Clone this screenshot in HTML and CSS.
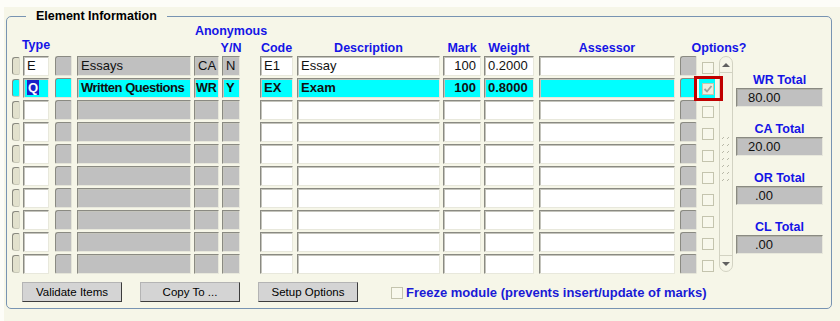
FILE: index.html
```html
<!DOCTYPE html>
<html>
<head>
    <title>Element Information</title>
    <meta name="viewport" content="width=device-width, initial-scale=1.0">
    <link rel="stylesheet" href="styles.css">
</head>
<body>
    <div class="screen">
        <fieldset class="group">
            <legend>Element Information</legend>

            <!-- Column headings -->
            <div class="head">
                <span class="anon">Anonymous</span>
            </div>
            <div class="head">
                <span class="c-ind"></span>
                <span class="c-type raised">Type</span>
                <span class="c-btn"></span>
                <span class="c-name"></span>
                <span class="c-ca"></span>
                <span class="c-yn">Y/N</span>
                <span class="c-code">Code</span>
                <span class="c-desc">Description</span>
                <span class="c-mark">Mark</span>
                <span class="c-weight">Weight</span>
                <span class="c-assess">Assessor</span>
                <span class="opts">Options?</span>
            </div>

            <div class="body">
                <div class="rows">
                    <div class="row">
                        <div class="c-ind ind"></div>
                        <div class="c-type f white">E</div>
                        <div class="c-btn sq grey"></div>
                        <div class="c-name f grey">Essays</div>
                        <div class="c-ca f grey">CA</div>
                        <div class="c-yn f grey">N</div>
                        <div class="c-code f white">E1</div>
                        <div class="c-desc f white">Essay</div>
                        <div class="c-mark f white num">100</div>
                        <div class="c-weight f white">0.2000</div>
                        <div class="c-assess f white"></div>
                        <div class="c-btn2 sq grey"></div>
                        <div class="c-chk"><span class="box"></span></div>
                    </div>
                    <div class="row current">
                        <div class="c-ind ind"></div>
                        <div class="c-type f"><span class="sel">Q</span></div>
                        <div class="c-btn sq"></div>
                        <div class="c-name f tight">Written Questions</div>
                        <div class="c-ca f narrow">WR</div>
                        <div class="c-yn f">Y</div>
                        <div class="c-code f">EX</div>
                        <div class="c-desc f">Exam</div>
                        <div class="c-mark f num">100</div>
                        <div class="c-weight f">0.8000</div>
                        <div class="c-assess f"></div>
                        <div class="c-btn2 sq"></div>
                        <div class="c-chk">
                            <span class="box checked">
                                <svg width="10" height="10" viewBox="0 0 10 10"><path d="M1.5 5 L4 7.5 L8.5 2" fill="none" stroke="#a0a098" stroke-width="1.8"/></svg>
                            </span>
                            <span class="focus"></span>
                        </div>
                    </div>
                    <div class="row">
                        <div class="c-ind ind"></div><div class="c-type f white"></div><div class="c-btn sq grey"></div><div class="c-name f grey"></div><div class="c-ca f grey"></div><div class="c-yn f grey"></div><div class="c-code f white"></div><div class="c-desc f white"></div><div class="c-mark f white"></div><div class="c-weight f white"></div><div class="c-assess f white"></div><div class="c-btn2 sq grey"></div><div class="c-chk"><span class="box"></span></div>
                    </div>
                    <div class="row">
                        <div class="c-ind ind"></div><div class="c-type f white"></div><div class="c-btn sq grey"></div><div class="c-name f grey"></div><div class="c-ca f grey"></div><div class="c-yn f grey"></div><div class="c-code f white"></div><div class="c-desc f white"></div><div class="c-mark f white"></div><div class="c-weight f white"></div><div class="c-assess f white"></div><div class="c-btn2 sq grey"></div><div class="c-chk"><span class="box"></span></div>
                    </div>
                    <div class="row">
                        <div class="c-ind ind"></div><div class="c-type f white"></div><div class="c-btn sq grey"></div><div class="c-name f grey"></div><div class="c-ca f grey"></div><div class="c-yn f grey"></div><div class="c-code f white"></div><div class="c-desc f white"></div><div class="c-mark f white"></div><div class="c-weight f white"></div><div class="c-assess f white"></div><div class="c-btn2 sq grey"></div><div class="c-chk"><span class="box"></span></div>
                    </div>
                    <div class="row">
                        <div class="c-ind ind"></div><div class="c-type f white"></div><div class="c-btn sq grey"></div><div class="c-name f grey"></div><div class="c-ca f grey"></div><div class="c-yn f grey"></div><div class="c-code f white"></div><div class="c-desc f white"></div><div class="c-mark f white"></div><div class="c-weight f white"></div><div class="c-assess f white"></div><div class="c-btn2 sq grey"></div><div class="c-chk"><span class="box"></span></div>
                    </div>
                    <div class="row">
                        <div class="c-ind ind"></div><div class="c-type f white"></div><div class="c-btn sq grey"></div><div class="c-name f grey"></div><div class="c-ca f grey"></div><div class="c-yn f grey"></div><div class="c-code f white"></div><div class="c-desc f white"></div><div class="c-mark f white"></div><div class="c-weight f white"></div><div class="c-assess f white"></div><div class="c-btn2 sq grey"></div><div class="c-chk"><span class="box"></span></div>
                    </div>
                    <div class="row">
                        <div class="c-ind ind"></div><div class="c-type f white"></div><div class="c-btn sq grey"></div><div class="c-name f grey"></div><div class="c-ca f grey"></div><div class="c-yn f grey"></div><div class="c-code f white"></div><div class="c-desc f white"></div><div class="c-mark f white"></div><div class="c-weight f white"></div><div class="c-assess f white"></div><div class="c-btn2 sq grey"></div><div class="c-chk"><span class="box"></span></div>
                    </div>
                    <div class="row">
                        <div class="c-ind ind"></div><div class="c-type f white"></div><div class="c-btn sq grey"></div><div class="c-name f grey"></div><div class="c-ca f grey"></div><div class="c-yn f grey"></div><div class="c-code f white"></div><div class="c-desc f white"></div><div class="c-mark f white"></div><div class="c-weight f white"></div><div class="c-assess f white"></div><div class="c-btn2 sq grey"></div><div class="c-chk"><span class="box"></span></div>
                    </div>
                    <div class="row">
                        <div class="c-ind ind"></div><div class="c-type f white"></div><div class="c-btn sq grey"></div><div class="c-name f grey"></div><div class="c-ca f grey"></div><div class="c-yn f grey"></div><div class="c-code f white"></div><div class="c-desc f white"></div><div class="c-mark f white"></div><div class="c-weight f white"></div><div class="c-assess f white"></div><div class="c-btn2 sq grey"></div><div class="c-chk"><span class="box"></span></div>
                    </div>
                </div>

                <!-- Record scrollbar -->
                <div class="scroll">
                    <div class="sb-end sb-up">
                        <svg width="12" height="8" viewBox="0 0 12 8"><path d="M2 6 L6 2 L10 6 Z" fill="#606060"/></svg>
                    </div>
                    <div class="sb-track">
                        <svg class="grip" width="10" height="48" viewBox="0 0 10 48">
                            <g stroke="#b8b8a8" stroke-width="1">
                                <path d="M1 4 L3 2 M6 4 L8 2"/>
                                <path d="M1 11 L3 9 M6 11 L8 9"/>
                                <path d="M1 18 L3 16 M6 18 L8 16"/>
                                <path d="M1 25 L3 23 M6 25 L8 23"/>
                                <path d="M1 32 L3 30 M6 32 L8 30"/>
                                <path d="M1 39 L3 37 M6 39 L8 37"/>
                                <path d="M1 46 L3 44 M6 46 L8 44"/>
                            </g>
                        </svg>
                    </div>
                    <div class="sb-end sb-down">
                        <svg width="12" height="8" viewBox="0 0 12 8"><path d="M2 2 L6 6 L10 2 Z" fill="#606060"/></svg>
                    </div>
                </div>

                <!-- Totals per element type -->
                <div class="totals">
                    <div class="tot-label">WR Total</div>
                    <div class="tot-box">80.00</div>
                    <div class="tot-label">CA Total</div>
                    <div class="tot-box">20.00</div>
                    <div class="tot-label">OR Total</div>
                    <div class="tot-box short">.00</div>
                    <div class="tot-label">CL Total</div>
                    <div class="tot-box short">.00</div>
                </div>
            </div>

            <div class="actions">
                <button class="btn">Validate Items</button>
                <button class="btn">Copy To ...</button>
                <button class="btn">Setup Options</button>
                <span class="box freeze-box"></span>
                <span class="freeze">Freeze module (prevents insert/update of marks)</span>
            </div>
        </fieldset>
    </div>
</body>
</html>
```

FILE: styles.css
```css
* {
    box-sizing: border-box;
}

body {
    margin: 0;
    background-color: #fdfdf8;
    font-family: "Liberation Sans", Arial, sans-serif;
}

.screen {
    margin: 7px 0 0 4px;
    padding-top: 2px;
    height: 314px;
    background-color: #f6f6e8;
}

.group {
    margin: 0 0 0 2px;
    width: 826px;
    padding: 1px 6px 6px 5px;
    border: 1px solid #7894b2;
    border-radius: 5px;
}

.group legend {
    margin-left: 14px;
    padding: 0 10px;
    font-size: 12.5px;
    font-weight: bold;
    line-height: 14px;
    color: #000;
}

/* headings */
.head {
    display: flex;
    height: 14px;
    font-size: 12.5px;
    font-weight: bold;
    line-height: 14px;
    color: #1414e6;
}

.head + .head {
    margin-top: 3px;
}

.head span {
    display: flex;
    justify-content: center;
    white-space: nowrap;
}

.head .raised {
    margin-top: -3px;
}

.anon {
    margin-left: 210px;
    width: 18px;
}

.opts {
    margin-left: 5px;
    width: 78px;
}

/* column sizes */
.c-ind { width: 8px; }
.c-type { width: 26px; margin-left: 3px; }
.c-btn { width: 17px; margin-left: 6px; }
.c-name { width: 114px; margin-left: 5px; }
.c-ca { width: 25px; margin-left: 3px; }
.c-yn { width: 18px; margin-left: 3px; }
.c-code { width: 33px; margin-left: 20px; }
.c-desc { width: 143px; margin-left: 4px; }
.c-mark { width: 38px; margin-left: 3px; }
.c-weight { width: 50px; margin-left: 3px; }
.c-assess { width: 136px; margin-left: 5px; }
.c-btn2 { width: 17px; margin-left: 5px; }
.c-chk { width: 16px; margin-left: 2px; padding: 6px 0 0 3px; position: relative; }

/* rows */
.body {
    display: flex;
    margin-top: 1px;
}

.rows {
    display: flex;
    flex-direction: column;
    gap: 2px;
}

.row {
    display: flex;
    height: 20px;
}

.f {
    height: 20px;
    padding: 0 3px;
    border: 1px solid;
    border-color: #8a8a82 #e8e8dc #e8e8dc #8a8a82;
    box-shadow: inset 1px 1px 0 #c4c4bc;
    font-size: 13px;
    line-height: 18px;
    color: #111;
    white-space: nowrap;
    overflow: hidden;
}

.num {
    text-align: right;
    padding-right: 4px;
}

.white { background-color: #fff; }
.grey { background-color: #c0c0c0; }

.ind {
    height: 18px;
    margin-top: 1px;
    border: 1px solid;
    border-color: #8a8a80 #d8d8c8 #c8c8b8 #8a8a80;
    border-radius: 3px 2px 2px 3px;
    background-color: #e2e1cd;
}

.sq {
    height: 20px;
    border: 1px solid;
    border-color: #8a8a82 #e4e4d8 #e4e4d8 #8a8a82;
    border-radius: 3px 2px 2px 2px;
}

.box {
    display: block;
    width: 12px;
    height: 12px;
    border: 1px solid #c4c4ae;
    background-color: #f8f8ec;
}

.row.current > div:not(.c-chk) {
    background-color: #00ffff;
    font-weight: bold;
}

.row.current .c-chk {
    background-color: #00ffff;
    padding-top: 5px;
}

.row.current .tight {
    letter-spacing: -0.5px;
}

.row.current .narrow {
    padding: 0 1px;
    font-size: 12.5px;
}

.row.current .box {
    background-color: #eeeedf;
}

.box svg {
    display: block;
}

.sel {
    background-color: #1a22c8;
    color: #fff;
    padding: 0 1px;
}

.focus {
    position: absolute;
    left: -5px;
    top: -2px;
    width: 29px;
    height: 25px;
    border: 3px solid #c00000;
}

/* scrollbar */
.scroll {
    margin-left: 4px;
    width: 14px;
    height: 216px;
    display: flex;
    flex-direction: column;
    border: 1px solid #d2d2c2;
    border-radius: 7px;
}

.sb-end {
    height: 16px;
    display: flex;
    justify-content: center;
    align-items: center;
}

.sb-up {
    border-bottom: 1px solid #d2d2c2;
}

.sb-down {
    border-top: 1px solid #d2d2c2;
}

.sb-track {
    flex: 1;
    display: flex;
    justify-content: center;
    padding-top: 62px;
}

/* totals */
.totals {
    margin-left: 3px;
    width: 87px;
    padding-top: 17px;
}

.tot-label {
    text-align: center;
    font-size: 12.5px;
    font-weight: bold;
    line-height: 14px;
    color: #1414e6;
}

.tot-box + .tot-label {
    margin-top: 15px;
}

.tot-box {
    margin-top: 1px;
    height: 19px;
    padding-left: 11px;
    border: 1px solid;
    border-color: #8a8a82 #e8e8dc #e8e8dc #8a8a82;
    box-shadow: inset 1px 1px 0 #b0b0a8;
    background-color: #c0c0c0;
    font-size: 13px;
    line-height: 17px;
    color: #111;
}

.tot-box.short {
    padding-left: 18px;
}

/* buttons */
.actions {
    display: flex;
    align-items: center;
    margin-top: 8px;
    padding-left: 10px;
}

.btn {
    width: 100px;
    height: 20px;
    margin-right: 18px;
    padding: 0;
    border: 1px solid;
    border-color: #b4b4b4 #3c3c3c #3c3c3c #b4b4b4;
    background-color: #d4d4d4;
    font-family: "Liberation Sans", Arial, sans-serif;
    font-size: 11.5px;
    color: #000;
}

.freeze-box {
    margin-left: 15px;
    margin-top: 1px;
}

.freeze {
    margin-left: 3px;
    font-size: 13px;
    font-weight: bold;
    color: #1a1ad6;
}
```
